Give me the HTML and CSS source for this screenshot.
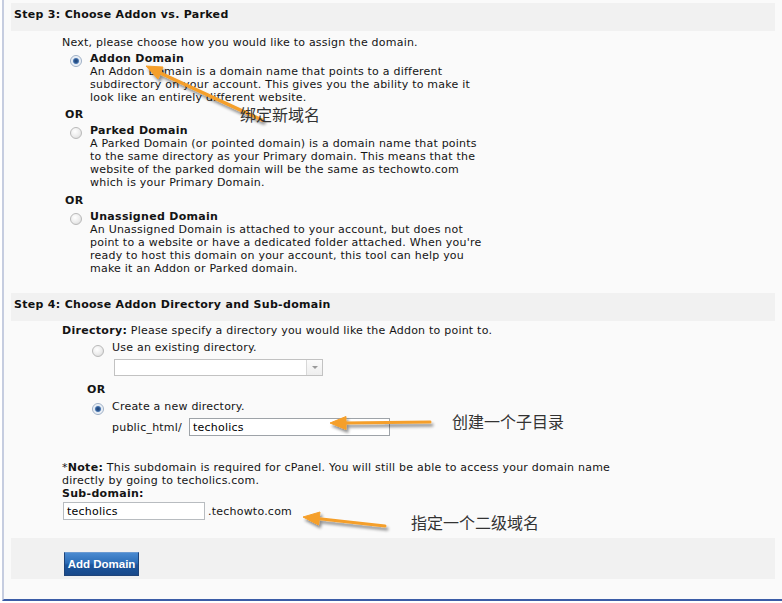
FILE: index.html
```html
<!DOCTYPE html>
<html>
<head>
<meta charset="utf-8">
<link rel="stylesheet" href="styles.css">
</head>
<body>
<div class="page">
  <section class="step">
    <h2 class="step-head">Step 3: Choose Addon vs. Parked</h2>
    <div class="step-body s3">
      <p class="line">Next, please choose how you would like to assign the domain.</p>
      <div class="option">
        <span class="radio on"></span>
        <div class="opt-text">
          <b>Addon Domain</b><br>
          An Addon Domain is a domain name that points to a different<br>
          subdirectory on your account. This gives you the ability to make it<br>
          look like an entirely different website.
        </div>
      </div>
      <div class="or">OR</div>
      <div class="option">
        <span class="radio"></span>
        <div class="opt-text">
          <b>Parked Domain</b><br>
          A Parked Domain (or pointed domain) is a domain name that points<br>
          to the same directory as your Primary domain. This means that the<br>
          website of the parked domain will be the same as techowto.com<br>
          which is your Primary Domain.
        </div>
      </div>
      <div class="or or2">OR</div>
      <div class="option">
        <span class="radio"></span>
        <div class="opt-text">
          <b>Unassigned Domain</b><br>
          An Unassigned Domain is attached to your account, but does not<br>
          point to a website or have a dedicated folder attached. When you're<br>
          ready to host this domain on your account, this tool can help you<br>
          make it an Addon or Parked domain.
        </div>
      </div>
    </div>
  </section>

  <section class="step step4">
    <h2 class="step-head">Step 4: Choose Addon Directory and Sub-domain</h2>
    <div class="step-body s4">
      <p class="line"><b>Directory:</b> Please specify a directory you would like the Addon to point to.</p>
      <div class="dir-opt first">
        <span class="radio"></span>
        <span>Use an existing directory.</span>
      </div>
      <div class="select"><span class="select-btn"><span class="caret"></span></span></div>
      <div class="or or-dir">OR</div>
      <div class="dir-opt second">
        <span class="radio on"></span>
        <span>Create a new directory.</span>
      </div>
      <div class="path-row">
        <span>public_html/</span>
        <span class="input path-input">techolics</span>
      </div>
      <p class="line note">*<b>Note:</b> This subdomain is required for cPanel. You will still be able to access your domain name<br>directly by going to techolics.com.<br><b>Sub-domain:</b></p>
      <div class="sub-row">
        <span class="input sub-input">techolics</span>
        <span>.techowto.com</span>
      </div>
    </div>
    <div class="actions">
      <span class="btn">Add Domain</span>
    </div>
  </section>

  <svg class="arrows" width="782" height="603" viewBox="0 0 782 603">
    <defs>
      <filter id="sh" x="-20%" y="-50%" width="140%" height="200%">
        <feGaussianBlur in="SourceAlpha" stdDeviation="1.5"/>
        <feOffset dx="2" dy="3" result="b"/>
        <feComponentTransfer><feFuncA type="linear" slope="0.45"/></feComponentTransfer>
        <feMerge><feMergeNode/><feMergeNode in="SourceGraphic"/></feMerge>
      </filter>
    </defs>
    <g filter="url(#sh)" fill="#f59f2a" stroke="#f59f2a">
      <line x1="262" y1="120" x2="158" y2="72" stroke-width="3.5" stroke-linecap="round"/>
      <polygon points="146,66 163,67 158,79" stroke-width="1" stroke-linejoin="round"/>
      <line x1="430" y1="422" x2="344" y2="423" stroke-width="3" stroke-linecap="round"/>
      <polygon points="330,423 346,416.5 346,429.5" stroke-width="1" stroke-linejoin="round"/>
      <line x1="385" y1="526" x2="317" y2="518.5" stroke-width="3" stroke-linecap="round"/>
      <polygon points="303,517 320,512 318.5,525" stroke-width="1" stroke-linejoin="round"/>
    </g>
  </svg>
  <span class="note-cn cn1">绑定新域名</span>
  <span class="note-cn cn2">创建一个子目录</span>
  <span class="note-cn cn3">指定一个二级域名</span>
</div>
</body>
</html>
```

FILE: styles.css
```css
html, body {
  margin: 0;
  padding: 0;
}
body {
  background: #ffffff;
  width: 782px;
  height: 603px;
  overflow: hidden;
  font-family: "DejaVu Sans", Verdana, sans-serif;
  font-size: 11px;
  line-height: 13px;
  letter-spacing: 0.22px;
  color: #141414;
}
b {
  letter-spacing: 0.3px;
}
.page {
  position: relative;
  box-sizing: border-box;
  margin-left: 2px;
  height: 601px;
  padding: 3px 7px 0 7px;
  background: #fafafa;
  border-left: 2px solid #c6cde0;
  border-bottom: 2px solid #3b5ca6;
}
.step-head {
  margin: 0;
  height: 28px;
  box-sizing: border-box;
  padding: 5px 3px 10px;
  font-size: 11px;
  line-height: 13px;
  font-weight: bold;
  letter-spacing: 0.3px;
  background: #f1f1f1;
  color: #111;
}
.step-body {
  padding-left: 51px;
}
.s3 {
  padding-top: 5px;
}
.line {
  margin: 0;
}
.option {
  display: flex;
  margin-top: 3px;
}
.option .radio {
  margin: 3px 8px 0 8px;
}
.or {
  margin-top: 4px;
  padding-left: 3px;
  font-weight: bold;
  letter-spacing: 0.3px;
}
.or2 {
  margin-top: 5px;
}
.radio {
  flex: none;
  display: inline-block;
  box-sizing: border-box;
  width: 12px;
  height: 12px;
  border-radius: 50%;
  border: 1px solid #b9b9b9;
  background: radial-gradient(circle at 40% 35%, #ffffff 0%, #ececec 55%, #d2d2d2 100%);
}
.radio.on {
  border: 1px solid #9fb0c6;
  background: radial-gradient(circle at 50% 50%, #1d3f70 0%, #2f5c96 28%, #5a83b8 38%, #dfe7f1 48%, #f3f6fa 70%, #c9d4e2 100%);
}
.step4 {
  margin-top: 18px;
}
.s4 .line:first-child {
  margin-top: 3px;
}
.dir-opt {
  display: flex;
  align-items: flex-start;
  height: 13px;
  margin-left: 30px;
}
.dir-opt .radio {
  margin: 4px 8px 0 0;
}
.dir-opt.first {
  margin-top: 4px;
}
.dir-opt.second {
  margin-top: 4px;
}
.dir-opt.second .radio {
  margin-top: 3px;
}
.select {
  box-sizing: border-box;
  width: 209px;
  height: 17px;
  margin: 5px 0 0 52px;
  background: #fff;
  border: 1px solid #c2c2c2;
  display: flex;
  justify-content: flex-end;
}
.select-btn {
  box-sizing: border-box;
  width: 16px;
  height: 15px;
  border-left: 1px solid #d8d8d8;
  background: linear-gradient(#fbfbfb, #eeeeee);
  display: flex;
  align-items: center;
  justify-content: center;
}
.caret {
  width: 0;
  height: 0;
  border-left: 3px solid transparent;
  border-right: 3px solid transparent;
  border-top: 3px solid #9a9a9a;
}
.or-dir {
  margin-top: 7px;
  margin-left: 22px;
}
.path-row {
  display: flex;
  align-items: center;
  margin: 5px 0 0 50px;
  gap: 7px;
}
.input {
  box-sizing: border-box;
  display: inline-block;
  height: 18px;
  padding: 2px 3px 0;
  background: #fff;
  border: 1px solid #a9a9a9;
  font-family: "DejaVu Sans", Verdana, sans-serif;
  font-size: 11px;
  line-height: 13px;
  color: #000;
}
.path-input {
  width: 201px;
  border-color: #9ea3a8;
}
.note {
  margin-top: 25px;
}
.sub-row {
  display: flex;
  align-items: center;
  margin: 2px 0 0 1px;
  gap: 3px;
}
.sub-input {
  width: 142px;
  border-color: #b8bcc0;
}
.actions {
  margin-top: 18px;
  height: 41px;
  box-sizing: border-box;
  padding: 14px 0 0 53px;
  background: #f1f1f1;
}
.btn {
  display: inline-block;
  box-sizing: border-box;
  width: 75px;
  height: 24px;
  padding-top: 5px;
  text-align: center;
  font-family: "Liberation Sans", Arial, sans-serif;
  font-weight: bold;
  font-size: 11.5px;
  line-height: 13px;
  letter-spacing: 0;
  color: #fff;
  background: linear-gradient(#4a8ad0 0%, #2c6db7 45%, #1c559c 55%, #18498a 100%);
  border: 1px solid #1f4479;
  border-top-color: #6a9ad2;
}
.arrows {
  position: absolute;
  left: -4px;
  top: 0;
  pointer-events: none;
}
.note-cn {
  position: absolute;
  font-family: "Noto Sans CJK SC", sans-serif;
  font-size: 16px;
  line-height: 20px;
  letter-spacing: 0;
  color: #333;
  white-space: nowrap;
}
.cn1 { left: 236px; top: 104px; }
.cn2 { left: 448px; top: 411px; }
.cn3 { left: 407px; top: 512px; }
```
